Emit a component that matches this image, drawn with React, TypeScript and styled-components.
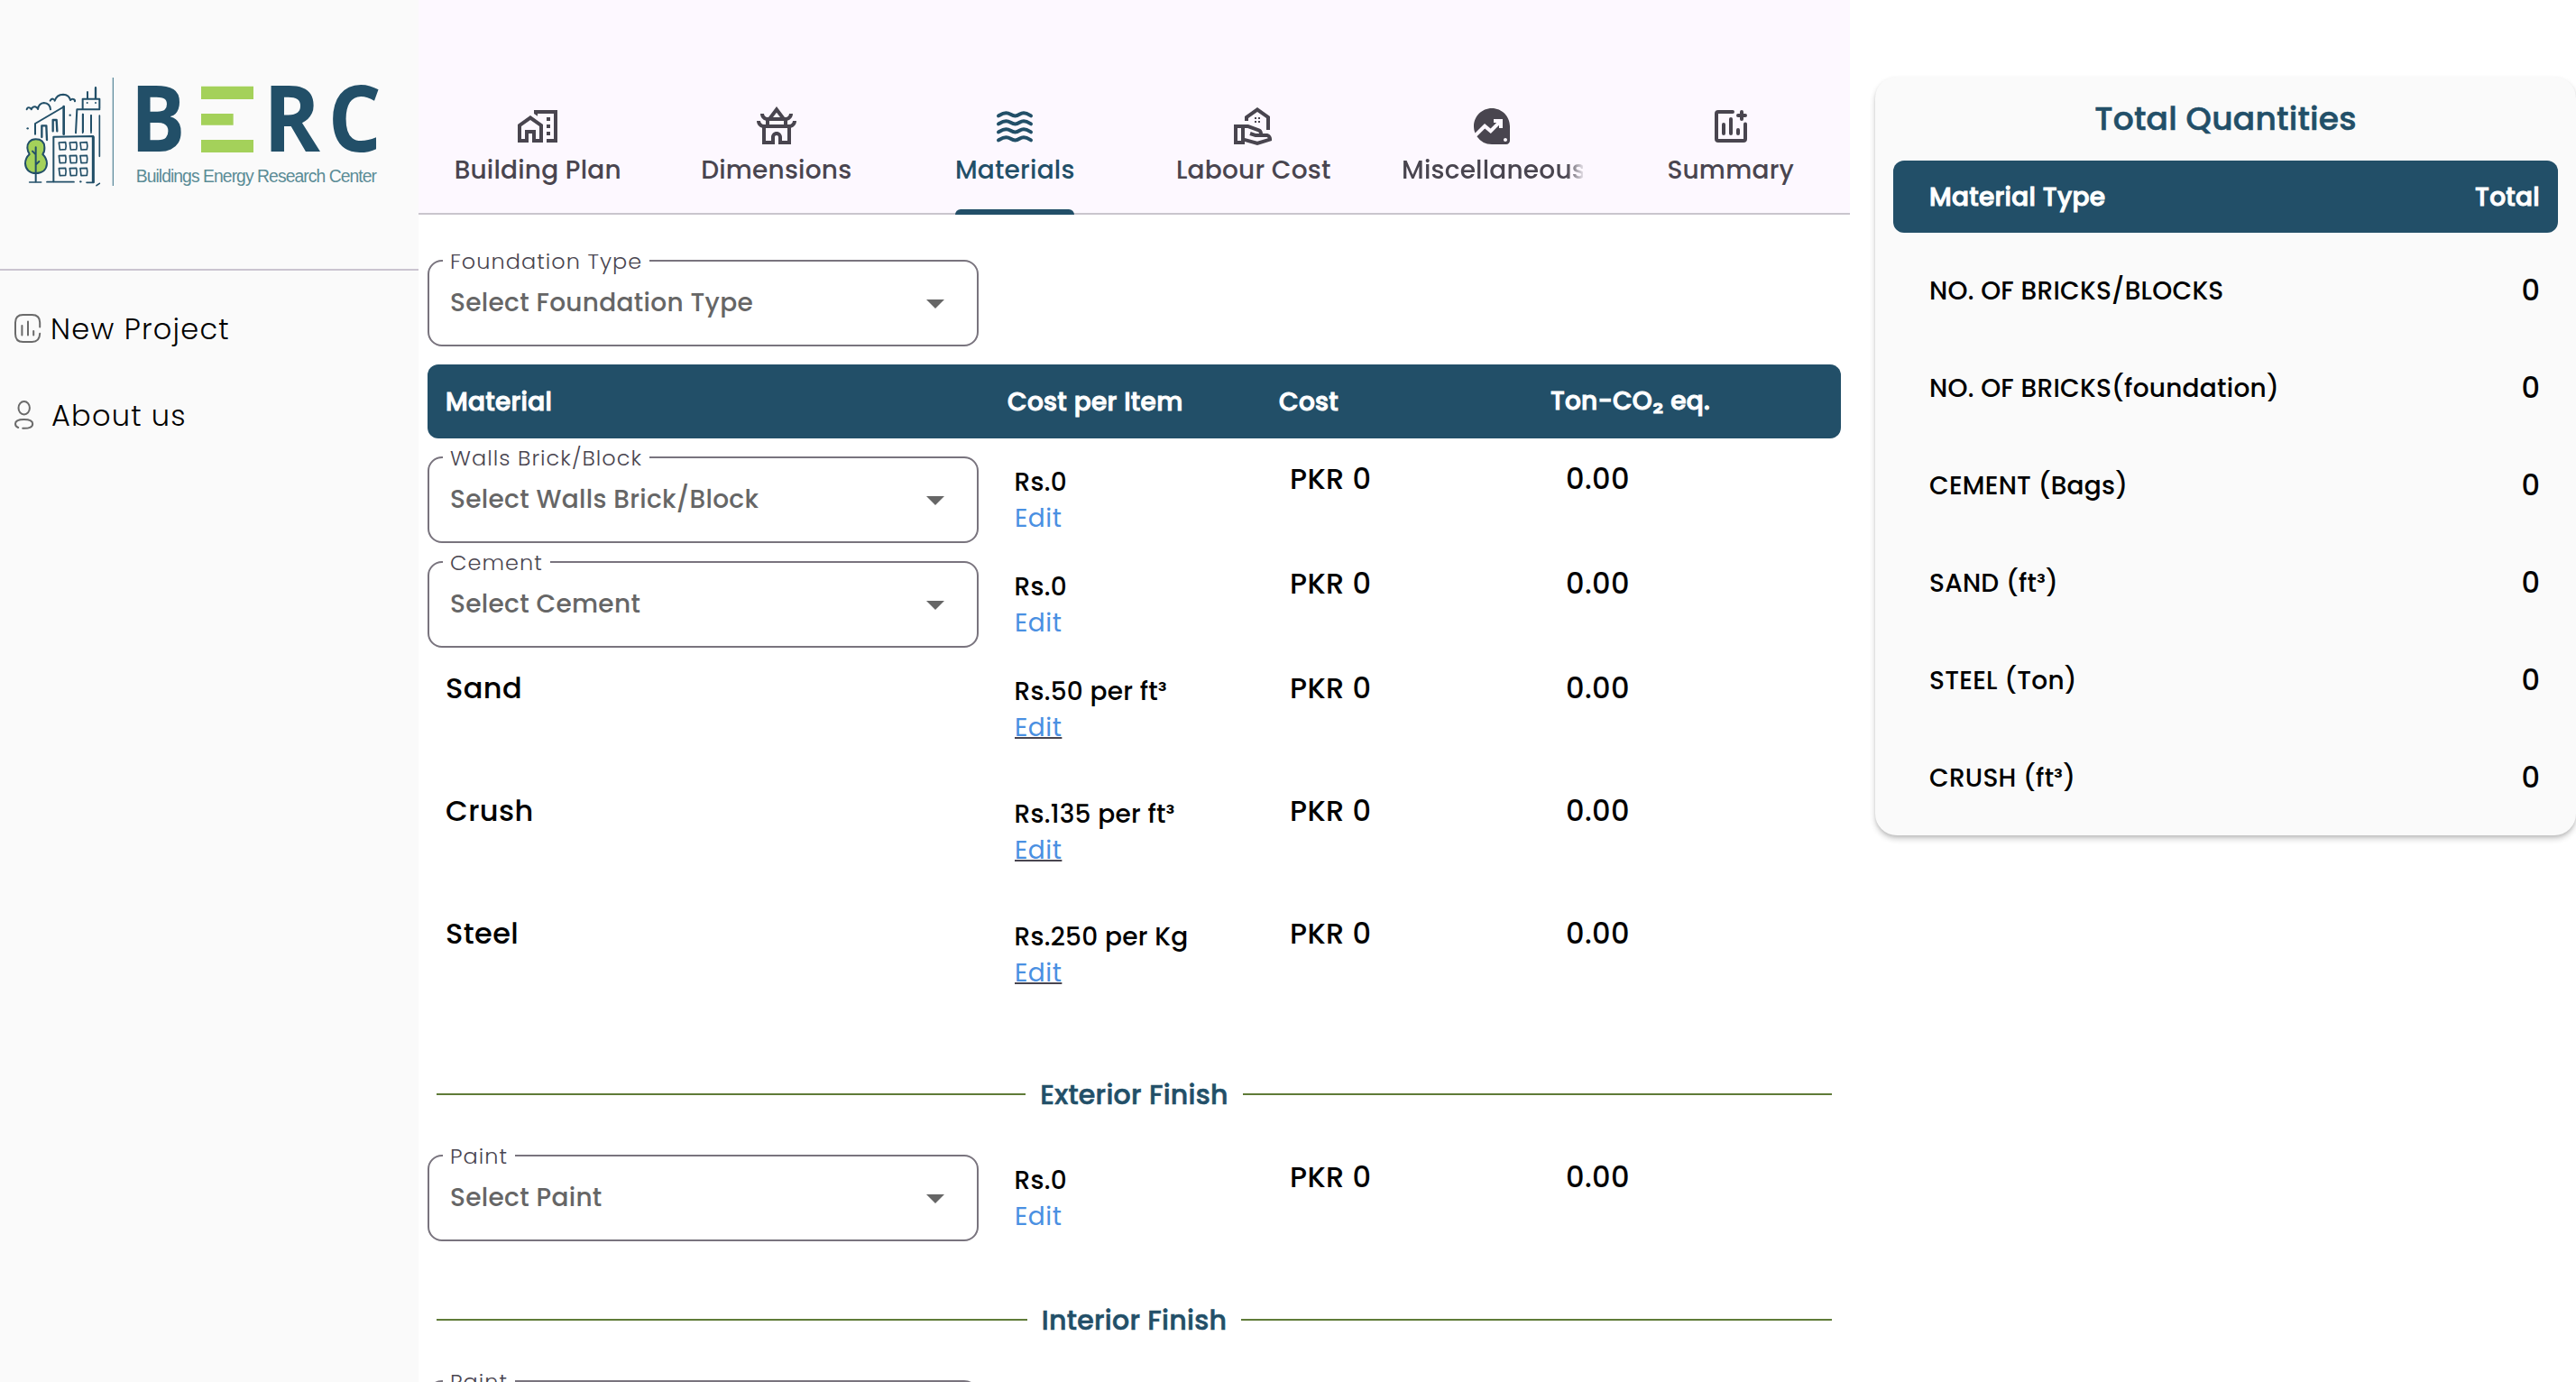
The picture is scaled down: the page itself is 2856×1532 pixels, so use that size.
import React from "react";
import styled, { createGlobalStyle } from "styled-components";
import {
  MdOutlineHomeWork,
  MdOutlineTempleBuddhist,
  MdOutlineRealEstateAgent,
  MdDataExploration,
} from "react-icons/md";

const navy = "#224f68";

const Global = createGlobalStyle`
  *, *::before, *::after { box-sizing: border-box; }
  body {
    margin: 0;
    background: #fff;
    color: #000;
    font-family: Poppins, Inter, "Open Sans", sans-serif;
  }
`;

const Page = styled.div`
  display: grid;
  grid-template-columns: 464px 1587px 1fr;
  height: 1532px;
  overflow: hidden;
`;

/* Sidebar */
const Sidebar = styled.aside`
  background: #fafafa;
`;
const Brand = styled.div`
  height: 300px;
  padding-top: 60px;
  border-bottom: 2px solid #cac4d0;
`;
const LogoSvg = styled.svg`
  display: block;
  width: 464px;
  height: 237px;
`;
const Nav = styled.nav`
  display: flex;
  flex-direction: column;
  padding-top: 16px;
`;
const NavItem = styled.a`
  display: flex;
  align-items: center;
  height: 96px;
  padding-left: 16px;
`;
const NavIcon = styled.svg<{ $gap: number }>`
  width: 30px;
  height: 32px;
  margin-right: ${(p) => p.$gap}px;
  fill: none;
  stroke: #6a6a6a;
  stroke-width: 2;
  stroke-linecap: round;
`;
const NavText = styled.span`
  margin-top: 1px;
  font-size: 32px;
  line-height: 41px;
  font-weight: 300;
  letter-spacing: 1.24px;
`;

/* Tabs */
const Main = styled.main`
  min-width: 0;
`;
const TabBar = styled.div`
  display: grid;
  grid-template-columns: repeat(6, minmax(0, 1fr));
  height: 238px;
  background: #fdf8ff;
  border-bottom: 2px solid #c9c5cd;
`;
const Tab = styled.button<{ $active?: boolean }>`
  position: relative;
  display: flex;
  flex-direction: column;
  align-items: center;
  gap: 4px;
  padding: 116px 32px 0;
  border: 0;
  background: none;
  font: inherit;
  color: ${(p) => (p.$active ? navy : "#49454f")};
  svg {
    width: 48px;
    height: 48px;
    flex: none;
  }
`;
const TabLabel = styled.span<{ $clipped?: boolean }>`
  max-width: 100%;
  overflow: hidden;
  white-space: nowrap;
  font-size: 28px;
  line-height: 41px;
  font-weight: 500;
  letter-spacing: 0.2px;
  ${(p) =>
    p.$clipped
      ? "mask-image: linear-gradient(to right, #000 calc(100% - 18px), rgba(0,0,0,.15));"
      : ""}
`;
const Indicator = styled.span`
  position: absolute;
  bottom: -2px;
  left: 66px;
  width: 132px;
  height: 6px;
  border-radius: 6px 6px 0 0;
  background: ${navy};
`;

/* Material form */
const Content = styled.div`
  padding: 50px 10px 0;
`;
const Field = styled.div`
  position: relative;
  display: flex;
  align-items: center;
  justify-content: space-between;
  width: 611px;
  height: 96px;
  padding: 0 36px 1px 23px;
  border: 2px solid #79747e;
  border-radius: 16px;
`;
const FieldLabel = styled.span`
  position: absolute;
  top: -13px;
  left: 15px;
  padding: 0 8px;
  background: #fff;
  color: #49454f;
  font-size: 24px;
  line-height: 25px;
  font-weight: 300;
  white-space: nowrap;
  letter-spacing: 1.02px;
`;
const FieldValue = styled.span`
  color: #666;
  font-size: 28px;
  line-height: 41px;
  font-weight: 500;
  letter-spacing: 0.3px;
`;
const Arrow = styled.span`
  margin-top: 3px;
  border: 10px solid transparent;
  border-top-color: #666;
  border-bottom: 0;
`;
const HeaderRow = styled.div`
  display: grid;
  grid-template-columns: 623px 301px 301px 1fr;
  align-items: center;
  height: 82px;
  margin: 20px 0;
  padding-left: 20px;
  border-radius: 12px;
  background: ${navy};
`;
const HeadCell = styled.span<{ $raised?: boolean }>`
  padding: 1px 0 ${(p) => (p.$raised ? 2 : 0)}px;
  color: #fff;
  font-size: 28px;
  line-height: 41px;
  font-weight: 500;
  letter-spacing: ${(p) => (p.$raised ? 0.2 : 0.3)}px;
  -webkit-text-stroke: 1px #fff;
`;
const Row = styled.div<{ $tall?: boolean }>`
  display: grid;
  grid-template-columns: 650px 306px 306px 1fr;
  align-items: start;
  height: ${(p) => (p.$tall ? 136 : 116)}px;
`;
const Amount = styled.span<{ $indent?: boolean }>`
  padding: 4px 0 0 ${(p) => (p.$indent ? 20 : 0)}px;
  font-size: 32px;
  line-height: 41px;
  font-weight: 500;
  letter-spacing: 0.4px;
`;
const PriceCell = styled.div`
  display: flex;
  flex-direction: column;
  align-items: flex-start;
  padding: 8px 0 0 0.5px;
`;
const Price = styled.span`
  font-size: 28px;
  line-height: 41px;
  font-weight: 500;
  letter-spacing: 0.25px;
`;
const Edit = styled.a<{ $underlined?: boolean }>`
  margin: -1px 0 0 0.5px;
  color: #4a90e2;
  font-size: 28px;
  line-height: 41px;
  letter-spacing: 0.5px;
  text-decoration: ${(p) => (p.$underlined ? "underline 2px #49454f" : "none")};
  text-underline-offset: 1px;
  text-decoration-skip-ink: none;
`;
const Section = styled.div`
  display: flex;
  align-items: center;
  gap: 16px;
  height: 134px;
  padding: 0 10px;
  &::before,
  &::after {
    content: "";
    flex: 1;
    height: 2px;
    background: #5f7b38;
  }
`;
const SectionTitle = styled.span`
  margin-top: 1px;
  color: ${navy};
  font-size: 30px;
  line-height: 43px;
  font-weight: 500;
  letter-spacing: 0.28px;
  -webkit-text-stroke: 0.6px ${navy};
`;

/* Totals */
const Side = styled.section`
  padding: 85px 0 0 28px;
`;
const Card = styled.div`
  height: 841px;
  padding: 21px 20px 0;
  border-radius: 24px;
  background: #fafafa;
  box-shadow: 0 4px 6px rgba(0, 0, 0, 0.2), 0 2px 3px rgba(0, 0, 0, 0.08);
`;
const CardTitle = styled.h2`
  margin: 0 0 21px;
  color: ${navy};
  font-size: 36px;
  line-height: 51px;
  font-weight: 500;
  letter-spacing: 0.25px;
  text-align: center;
  -webkit-text-stroke: 0.6px ${navy};
`;
const TotalsHead = styled.div`
  display: flex;
  align-items: center;
  justify-content: space-between;
  height: 80px;
  margin-bottom: 10px;
  padding: 0 20px 0 40px;
  border-radius: 12px;
  background: ${navy};
`;
const TotalsRow = styled.div`
  display: flex;
  align-items: center;
  justify-content: space-between;
  height: 108px;
  padding: 0 20px 0 40px;
`;
const TotalsLabel = styled.span`
  margin-top: 1px;
  font-size: 28px;
  line-height: 41px;
  font-weight: 500;
  letter-spacing: 0.25px;
`;
const TotalsValue = styled.span`
  margin-bottom: 1px;
  font-size: 32px;
  line-height: 41px;
  font-weight: 500;
`;

const WavesIcon = () => (
  <svg viewBox="0 0 48 48" fill="none" stroke="currentColor" strokeWidth="4" strokeLinecap="round">
    {[0, 9, 18, 27].map((y) => (
      <path
        key={y}
        transform={`translate(0 ${y})`}
        d="M6 12.4C9 10.6 11 9.2 14.5 9.2C19 9.2 20 12.4 24.5 12.4C29 12.4 29.5 9.2 34 9.2C37.5 9.2 39.5 10.8 42 12.4"
      />
    ))}
  </svg>
);

const ChartPlusIcon = () => (
  <svg viewBox="0 0 24 24" fill="none" stroke="currentColor" strokeWidth="2" strokeLinecap="round" strokeLinejoin="round">
    <path d="M13 4H5Q4 4 4 5V19Q4 20 5 20H19Q20 20 20 19V10.7" />
    <path d="M18 4V8M16 6H20M8 11V16M12 8V16M16 14V16" />
  </svg>
);

const Logo = () => (
  <LogoSvg viewBox="0 0 1392 711" fontFamily='"Open Sans", "Noto Sans", sans-serif'>
    <g fill="none" stroke={navy} strokeWidth="6" strokeLinecap="round" strokeLinejoin="round">
      <path d="M89 184Q91 176 97 178Q104 180 104 184Q108 174 117 175Q124 177 126 183Q129 163 146 162Q166 163 168 184" />
      <path d="M167 155Q170 148 176 149Q182 151 182 155Q188 135 210 134Q230 135 234 153Q240 147 244 150Q250 152 249 157" />
      <path d="M117 266V231L209 177" />
      <path d="M212 174V266" strokeWidth="8" />
      <path d="M139 276V238H154L156 285M176 256V219H188L190 256" strokeWidth="7" />
      <path d="M275 181V149H331V181M291 126V146M318 111V148M252 262L256 184H331M276 200V258M303 204V254" />
      <path d="M318 113V146" strokeWidth="7" />
      <path d="M331 204V340M275 200V262M303 204V262" strokeWidth="5" />
      <path d="M178 424V275L310 273V424" />
      <path d="M310 276V424" strokeWidth="9" />
      <path d="M156 425H246M288 427H312M98 426H137M321 437L331 430" strokeWidth="5" />
      {[293, 337, 379].map((y) =>
        [196, 232, 267].map((x) => (
          <path key={`${x}-${y}`} strokeWidth="5" d={`M${x} ${y + 1}L${x + 22} ${y}Q${x + 25} ${y + 12} ${x + 22} ${y + 24}L${x + 3} ${y + 25}Z`} />
        ))
      )}
      <path
        fill="#a4d15a"
        d="M119 283C99 283 90 298 91 312C92 324 96 330 98 333C88 342 84 352 84 364C85 384 99 396 119 396C141 396 155 384 156 364C156 350 150 341 142 333C147 326 149 319 148 309C147 293 137 283 119 283Z"
      />
      <path d="M119 310V424M119 334L108 323M119 368L130 357" />
    </g>
    <g fill={navy}>
      <circle cx="92" cy="247" r="3.5" />
      <circle cx="233" cy="203" r="3.5" />
      <circle cx="290" cy="162" r="3" />
      <circle cx="318" cy="162" r="3" />
      <circle cx="268" cy="424" r="3.5" />
    </g>
    <path d="M376 78V438" stroke="#4f8294" strokeWidth="3.5" />
    <g fill={navy} fontSize="305" fontWeight="700">
      <text x="434" y="323" textLength="182" lengthAdjust="spacingAndGlyphs">B</text>
      <text x="876" y="323" textLength="189" lengthAdjust="spacingAndGlyphs">R</text>
      <text x="1091" y="323" textLength="177" lengthAdjust="spacingAndGlyphs">C</text>
    </g>
    <path fill="#a4d15a" d="M669 107H843V150H669ZM669 198H776V236H669ZM669 285H843V327H669Z" />
    <text x="452" y="427" fontSize="58" fill="#5b8c96" fontFamily='"Liberation Sans", Arial, sans-serif' textLength="802">
      Buildings Energy Research Center
    </text>
  </LogoSvg>
);

const tabs = [
  { label: "Building Plan", icon: <MdOutlineHomeWork /> },
  { label: "Dimensions", icon: <MdOutlineTempleBuddhist /> },
  { label: "Materials", icon: <WavesIcon />, active: true },
  { label: "Labour Cost", icon: <MdOutlineRealEstateAgent /> },
  { label: "Miscellaneous", icon: <MdDataExploration />, clipped: true },
  { label: "Summary", icon: <ChartPlusIcon /> },
];

const Select = ({ label }: { label: string }) => (
  <Field>
    <FieldLabel>{label}</FieldLabel>
    <FieldValue>Select {label}</FieldValue>
    <Arrow />
  </Field>
);

type MaterialProps = { name: string; price: string; selectable?: boolean };
const Material = ({ name, price, selectable }: MaterialProps) => (
  <Row $tall={!selectable}>
    {selectable ? <Select label={name} /> : <Amount $indent>{name}</Amount>}
    <PriceCell>
      <Price>{price}</Price>
      <Edit $underlined={!selectable}>Edit</Edit>
    </PriceCell>
    <Amount>PKR 0</Amount>
    <Amount>0.00</Amount>
  </Row>
);

const materials: MaterialProps[] = [
  { name: "Walls Brick/Block", price: "Rs.0", selectable: true },
  { name: "Cement", price: "Rs.0", selectable: true },
  { name: "Sand", price: "Rs.50 per ft³" },
  { name: "Crush", price: "Rs.135 per ft³" },
  { name: "Steel", price: "Rs.250 per Kg" },
];

const totals = [
  "NO. OF BRICKS/BLOCKS",
  "NO. OF BRICKS(foundation)",
  "CEMENT (Bags)",
  "SAND (ft³)",
  "STEEL (Ton)",
  "CRUSH (ft³)",
];

export default function App() {
  return (
    <Page>
      <Global />
      <Sidebar>
        <Brand>
          <Logo />
        </Brand>
        <Nav>
          <NavItem>
            <NavIcon viewBox="0 0 30 32" $gap={10}>
              <path d="M28.2 14.5V9.5C28.2 4 25.5 1 19.5 1H9.5C3.8 1 1 4 1 9.5V22C1 28 4 31 9.5 31H19.5C25 31 28 28.5 28.2 21.8" />
              <path d="M8.4 13V23.6M15 8.4V23.6M21.2 19V23.6" />
            </NavIcon>
            <NavText>New Project</NavText>
          </NavItem>
          <NavItem>
            <NavIcon viewBox="0 0 30 32" $gap={11}>
              <ellipse cx="10.7" cy="8.3" rx="6.2" ry="7.2" />
              <path d="M4.2 30C2 29.2 1 27.6 1 25.8C1 22.5 5 20.9 10.5 20.9C16 20.9 20.2 22.5 20.2 25.8C20.2 29.8 16 31.2 9.2 30.8" />
            </NavIcon>
            <NavText>About us</NavText>
          </NavItem>
        </Nav>
      </Sidebar>

      <Main>
        <TabBar>
          {tabs.map((t) => (
            <Tab key={t.label} $active={t.active}>
              {t.icon}
              <TabLabel $clipped={t.clipped}>{t.label}</TabLabel>
              {t.active && <Indicator />}
            </Tab>
          ))}
        </TabBar>
        <Content>
          <Select label="Foundation Type" />
          <HeaderRow>
            <HeadCell>Material</HeadCell>
            <HeadCell>Cost per Item</HeadCell>
            <HeadCell>Cost</HeadCell>
            <HeadCell $raised>Ton-CO₂ eq.</HeadCell>
          </HeaderRow>
          {materials.map((m) => (
            <Material key={m.name} {...m} />
          ))}
          <Section>
            <SectionTitle>Exterior Finish</SectionTitle>
          </Section>
          <Material name="Paint" price="Rs.0" selectable />
          <Section>
            <SectionTitle>Interior Finish</SectionTitle>
          </Section>
          <Material name="Paint" price="Rs.0" selectable />
        </Content>
      </Main>

      <Side>
        <Card>
          <CardTitle>Total Quantities</CardTitle>
          <TotalsHead>
            <HeadCell>Material Type</HeadCell>
            <HeadCell>Total</HeadCell>
          </TotalsHead>
          {totals.map((label) => (
            <TotalsRow key={label}>
              <TotalsLabel>{label}</TotalsLabel>
              <TotalsValue>0</TotalsValue>
            </TotalsRow>
          ))}
        </Card>
      </Side>
    </Page>
  );
}
